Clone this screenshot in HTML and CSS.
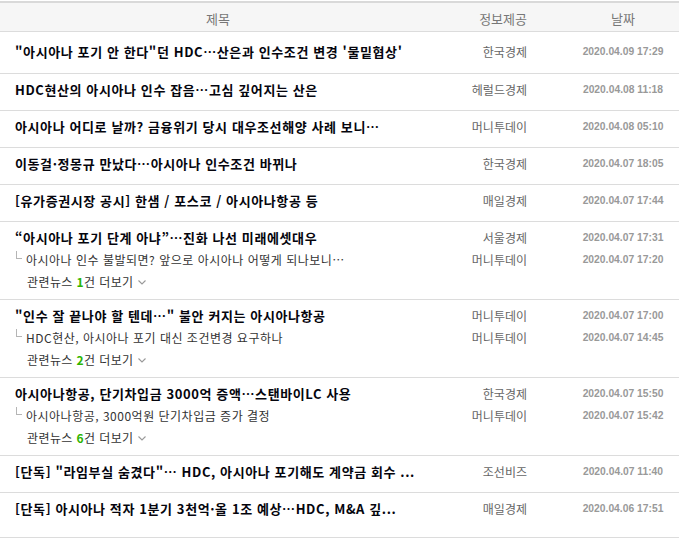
FILE: index.html
```html
<!DOCTYPE html>
<html lang="ko">
<head>
<meta charset="utf-8">
<title>관련 뉴스</title>
<link rel="stylesheet" href="styles.css">
</head>
<body>
<div class="board">
  <div class="head">
    <div class="h-title">제목</div>
    <div class="h-src">정보제공</div>
    <div class="h-date">날짜</div>
  </div>

  <div class="item first">
    <div class="title">"아시아나 포기 안 한다"던 HDC…산은과 인수조건 변경 '물밑협상'</div>
    <div class="src">한국경제</div>
    <div class="date">2020.04.09 17:29</div>
  </div>

  <div class="item">
    <div class="title">HDC현산의 아시아나 인수 잡음…고심 깊어지는 산은</div>
    <div class="src">헤럴드경제</div>
    <div class="date">2020.04.08 11:18</div>
  </div>

  <div class="item">
    <div class="title">아시아나 어디로 날까? 금융위기 당시 대우조선해양 사례 보니…</div>
    <div class="src">머니투데이</div>
    <div class="date">2020.04.08 05:10</div>
  </div>

  <div class="item">
    <div class="title">이동걸·정몽규 만났다…아시아나 인수조건 바뀌나</div>
    <div class="src">한국경제</div>
    <div class="date">2020.04.07 18:05</div>
  </div>

  <div class="item">
    <div class="title">[유가증권시장 공시] 한샘 / 포스코 / 아시아나항공 등</div>
    <div class="src">매일경제</div>
    <div class="date">2020.04.07 17:44</div>
  </div>

  <div class="item group">
    <div class="title">“아시아나 포기 단계 아냐”…진화 나선 미래에셋대우</div>
    <div class="src">서울경제</div>
    <div class="date">2020.04.07 17:31</div>
    <div class="sub"><span class="elbow"></span>아시아나 인수 불발되면? 앞으로 아시아나 어떻게 되나보니…</div>
    <div class="src">머니투데이</div>
    <div class="date">2020.04.07 17:20</div>
    <div class="more">관련뉴스 <b class="num">1</b>건 더보기<svg class="chev" width="8" height="5" viewBox="0 0 8 5"><polyline points="0.5,0.5 4,4 7.5,0.5" fill="none" stroke="#999" stroke-width="1.1"/></svg></div>
  </div>

  <div class="item group">
    <div class="title">"인수 잘 끝나야 할 텐데…" 불안 커지는 아시아나항공</div>
    <div class="src">머니투데이</div>
    <div class="date">2020.04.07 17:00</div>
    <div class="sub"><span class="elbow"></span>HDC현산, 아시아나 포기 대신 조건변경 요구하나</div>
    <div class="src">머니투데이</div>
    <div class="date">2020.04.07 14:45</div>
    <div class="more">관련뉴스 <b class="num">2</b>건 더보기<svg class="chev" width="8" height="5" viewBox="0 0 8 5"><polyline points="0.5,0.5 4,4 7.5,0.5" fill="none" stroke="#999" stroke-width="1.1"/></svg></div>
  </div>

  <div class="item group">
    <div class="title">아시아나항공, 단기차입금 3000억 증액…스탠바이LC 사용</div>
    <div class="src">한국경제</div>
    <div class="date">2020.04.07 15:50</div>
    <div class="sub"><span class="elbow"></span>아시아나항공, 3000억원 단기차입금 증가 결정</div>
    <div class="src">머니투데이</div>
    <div class="date">2020.04.07 15:42</div>
    <div class="more">관련뉴스 <b class="num">6</b>건 더보기<svg class="chev" width="8" height="5" viewBox="0 0 8 5"><polyline points="0.5,0.5 4,4 7.5,0.5" fill="none" stroke="#999" stroke-width="1.1"/></svg></div>
  </div>

  <div class="item">
    <div class="title">[단독] "라임부실 숨겼다"… HDC, 아시아나 포기해도 계약금 회수 ...</div>
    <div class="src">조선비즈</div>
    <div class="date">2020.04.07 11:40</div>
  </div>

  <div class="item last">
    <div class="title">[단독] 아시아나 적자 1분기 3천억·올 1조 예상…HDC, M&amp;A 깊...</div>
    <div class="src">매일경제</div>
    <div class="date">2020.04.06 17:51</div>
  </div>
</div>
</body>
</html>
```

FILE: styles.css
```css
* { box-sizing: border-box; }

html, body {
  margin: 0;
  padding: 0;
  background: #fff;
}

body {
  padding-top: 1px;
  font-family: "Noto Sans CJK KR", "Noto Sans", sans-serif;
  color: #111;
}

.board {
  width: 679px;
  border-top: 2px solid #d9d9d9;
}

.head,
.item {
  display: grid;
  grid-template-columns: 436px 131px 112px;
  line-height: 22px;
  border-bottom: 1px solid #dcdcdc;
}

.head {
  background: #f6f6f6;
  padding: 5px 0 1px;
  font-size: 13px;
  color: #777;
}

.h-title { text-align: center; }
.h-src { text-align: right; padding-right: 40px; }
.h-date { text-align: center; }

.item {
  padding: 5px 0 9px;
}

.item.first { padding: 9px 0 10px; }
.item.group { padding: 5px 0 6px; }
.item.last { padding: 5px 0 17px; }

.title {
  padding-left: 15px;
  font-size: 13px;
  font-weight: 700;
  letter-spacing: 0.6px;
  color: #05050d;
  white-space: nowrap;
  overflow: hidden;
}

.sub {
  padding-left: 16px;
  font-size: 12px;
  letter-spacing: 0.5px;
  color: #333;
  white-space: nowrap;
  overflow: hidden;
}

.elbow {
  display: inline-block;
  width: 6px;
  height: 8px;
  border-left: 1px solid #b5b5b5;
  border-bottom: 1px solid #b5b5b5;
  margin-right: 4px;
  vertical-align: 6px;
}

.src {
  text-align: right;
  padding-right: 40px;
  font-size: 12px;
  color: #666;
  white-space: nowrap;
}

.date {
  text-align: center;
  font-family: "Liberation Sans", Arial, sans-serif;
  font-size: 10.3px;
  font-weight: 700;
  color: #999;
  white-space: nowrap;
}

.more {
  grid-column: 1 / -1;
  padding-left: 27px;
  font-size: 12px;
  letter-spacing: 0.4px;
  color: #333;
}

.num {
  color: #2db400;
  font-weight: 700;
}

.chev {
  margin-left: 4px;
  vertical-align: 2px;
}
```
